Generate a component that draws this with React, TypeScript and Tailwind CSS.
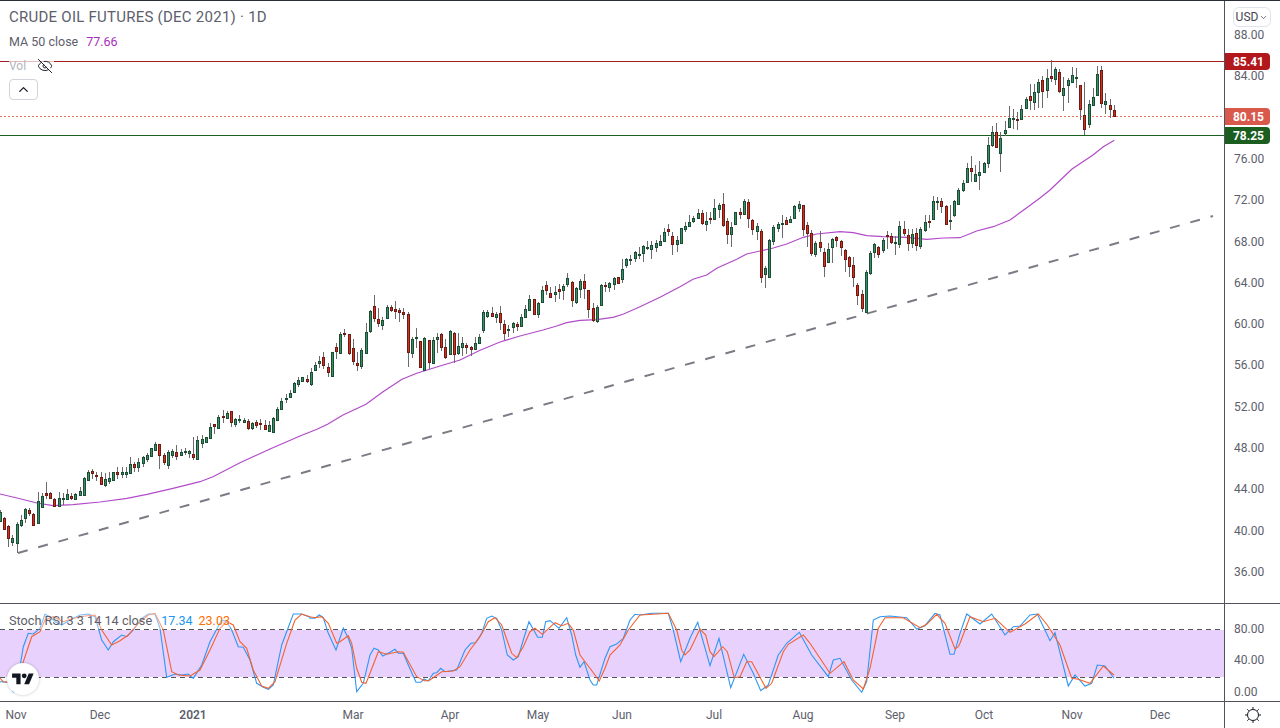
import { EyeOff, ChevronUp, ChevronDown } from "lucide-react";

type Row = number[];
type Pt = number[];

const WIDTH = 1224;

// rows are [x, top, bottom, high, low, up] read off 3x crops, so scale them back to page pixels
const seg = (x0: number, y0: number, rows: Row[]) =>
  rows.map(([x, t, b, h, l, up]) => ({
    x: Math.floor(x0 + x / 3) + 0.5,
    t: Math.round(y0 + t / 3) + 0.5,
    b: Math.max(Math.round(y0 + b / 3), Math.round(y0 + t / 3) + 1) + 0.5,
    h: y0 + h / 3,
    l: y0 + l / 3,
    up: up === 1,
  }));

const candles = [
  ...seg(0, 430, [
    [1, 247, 272, 240, 272, 1], [13, 265, 298, 262, 300, 0], [25, 289, 325, 285, 350, 0], [37, 325, 335, 315, 347, 1],
    [52, 283, 338, 277, 370, 1], [64, 271, 284, 255, 292, 1], [76, 238, 263, 235, 278, 1], [88, 240, 248, 235, 257, 0],
    [100, 253, 284, 250, 287, 0], [115, 214, 278, 186, 282, 1], [127, 199, 230, 190, 232, 1], [139, 190, 195, 156, 208, 0],
    [151, 190, 204, 186, 208, 0], [163, 208, 228, 205, 230, 0], [178, 205, 227, 186, 228, 1], [190, 205, 205, 190, 225, 1],
    [202, 193, 207, 177, 211, 1], [214, 199, 204, 190, 210, 0], [226, 193, 206, 190, 208, 1], [241, 184, 194, 170, 194, 1],
    [253, 145, 194, 140, 194, 1], [265, 127, 150, 120, 150, 1], [277, 124, 128, 118, 147, 0], [289, 135, 135, 126, 152, 0],
    [304, 142, 161, 125, 163, 0], [316, 148, 164, 128, 170, 1], [328, 145, 152, 125, 162, 1], [340, 127, 149, 125, 150, 1],
    [352, 127, 131, 112, 147, 0], [367, 127, 131, 110, 144, 1], [379, 127, 131, 112, 143, 1], [391, 103, 128, 82, 128, 1],
    [403, 103, 110, 95, 125, 0], [415, 97, 110, 85, 125, 1], [430, 82, 98, 78, 110, 1], [442, 76, 86, 70, 95, 1],
    [454, 55, 77, 55, 77, 1], [466, 43, 59, 35, 62, 1], [478, 43, 75, 43, 118, 0], [493, 76, 95, 70, 105, 0],
    [505, 67, 104, 60, 117, 1], [517, 64, 75, 58, 84, 1], [529, 67, 77, 45, 90, 0], [544, 67, 74, 58, 77, 1],
    [556, 64, 64, 55, 75, 1], [568, 63, 68, 60, 84, 1], [580, 72, 80, 22, 90, 0], [592, 31, 88, 18, 90, 1],
  ]),
  ...seg(200, 390, [
    [7, 148, 158, 135, 173, 1], [19, 142, 155, 142, 155, 1], [31, 112, 143, 100, 143, 1], [43, 103, 107, 103, 132, 0],
    [55, 82, 113, 75, 113, 1], [70, 78, 78, 60, 100, 0], [82, 69, 83, 62, 88, 1], [94, 64, 95, 64, 110, 0],
    [106, 88, 103, 85, 110, 1], [118, 88, 88, 75, 100, 1], [133, 91, 95, 85, 100, 1],
  ]),
  ...seg(240, 280, [
    [25, 424, 443, 418, 450, 0], [37, 430, 445, 425, 450, 1], [49, 427, 436, 420, 445, 0], [61, 430, 430, 418, 450, 0],
    [76, 436, 446, 420, 450, 0], [88, 435, 452, 424, 455, 1], [100, 415, 455, 412, 460, 1], [112, 388, 420, 380, 420, 1],
    [124, 364, 387, 355, 388, 1], [139, 355, 355, 342, 368, 1], [151, 340, 350, 330, 350, 1], [163, 310, 335, 305, 337, 1],
    [175, 301, 311, 292, 320, 1], [187, 292, 302, 290, 305, 1], [202, 297, 302, 285, 310, 0], [214, 277, 312, 265, 318, 1],
    [226, 256, 270, 247, 272, 1], [238, 243, 248, 228, 265, 1], [250, 232, 254, 215, 267, 0], [265, 262, 275, 250, 290, 0],
    [277, 217, 287, 215, 288, 1], [289, 202, 212, 190, 237, 0], [301, 163, 218, 155, 222, 1], [313, 160, 160, 148, 170, 0],
    [328, 163, 218, 163, 225, 0], [340, 205, 242, 178, 255, 0], [352, 250, 254, 215, 272, 0], [364, 211, 257, 205, 268, 1],
    [379, 157, 218, 130, 218, 1], [391, 94, 152, 90, 158, 1], [403, 79, 113, 45, 125, 0], [415, 118, 128, 85, 140, 0],
    [427, 121, 134, 110, 150, 1], [442, 82, 113, 75, 116, 1], [454, 82, 89, 75, 95, 0], [466, 88, 92, 64, 117, 0],
    [478, 91, 97, 85, 125, 0], [490, 97, 101, 85, 118, 0], [505, 103, 215, 95, 260, 0], [517, 178, 218, 170, 234, 1],
    [529, 172, 172, 145, 205, 1], [541, 184, 260, 184, 262, 0], [553, 175, 270, 172, 272, 1], [568, 181, 245, 181, 268, 0],
    [580, 181, 250, 172, 252, 1], [592, 172, 178, 160, 218, 1], [604, 163, 200, 158, 212, 0], [616, 202, 230, 178, 238, 0],
    [631, 154, 222, 150, 225, 1], [643, 160, 223, 155, 248, 0], [655, 199, 218, 160, 224, 1], [667, 190, 202, 170, 228, 1],
    [679, 196, 202, 190, 222, 0], [694, 202, 206, 198, 228, 0], [706, 190, 206, 170, 210, 1], [718, 172, 190, 162, 192, 1],
  ]),
  ...seg(480, 180, [
    [10, 397, 450, 390, 460, 1], [22, 397, 407, 390, 415, 1], [37, 400, 407, 380, 410, 0], [49, 403, 410, 395, 430, 1],
    [61, 400, 425, 378, 450, 0], [73, 433, 460, 420, 480, 0], [85, 447, 447, 435, 470, 1], [100, 430, 442, 425, 460, 1],
    [112, 433, 437, 425, 452, 0], [124, 412, 437, 402, 440, 1], [136, 388, 410, 375, 412, 1], [148, 358, 391, 345, 392, 1],
    [163, 358, 401, 358, 405, 0], [175, 370, 401, 365, 415, 1], [187, 331, 367, 318, 370, 1], [199, 316, 329, 303, 345, 0],
    [211, 340, 350, 320, 352, 0], [226, 336, 341, 318, 365, 1], [238, 328, 332, 312, 358, 0], [250, 319, 331, 312, 360, 1],
    [262, 295, 313, 280, 320, 1], [277, 307, 361, 303, 380, 0], [289, 325, 365, 320, 372, 1], [301, 304, 328, 298, 355, 1],
    [313, 304, 323, 282, 358, 0], [325, 331, 386, 331, 415, 0], [340, 385, 421, 370, 425, 0], [352, 382, 424, 375, 428, 1],
    [364, 316, 374, 312, 376, 1], [376, 316, 316, 306, 335, 0], [388, 310, 320, 305, 335, 1], [403, 295, 311, 290, 330, 1],
    [415, 292, 310, 290, 312, 0], [427, 268, 298, 237, 308, 1], [439, 238, 256, 235, 265, 1], [451, 238, 238, 225, 255, 1],
    [466, 217, 235, 212, 245, 1], [478, 223, 223, 200, 238, 1], [490, 198, 220, 195, 245, 1], [502, 202, 202, 182, 210, 1],
    [514, 196, 208, 182, 236, 1], [529, 190, 202, 180, 215, 1], [541, 184, 196, 165, 198, 1], [553, 157, 182, 145, 185, 1],
    [565, 148, 152, 133, 168, 0], [577, 169, 193, 155, 224, 0], [592, 181, 193, 168, 215, 1], [604, 145, 190, 143, 192, 1],
    [616, 138, 148, 125, 155, 1], [628, 127, 139, 105, 141, 1], [640, 115, 124, 108, 130, 1], [655, 100, 115, 88, 118, 1],
    [667, 100, 130, 90, 135, 0], [679, 124, 133, 95, 152, 1], [691, 115, 118, 95, 132, 0], [703, 85, 118, 58, 120, 1],
    [718, 76, 88, 70, 115, 1], [730, 73, 136, 40, 140, 0], [742, 122, 163, 115, 192, 0], [754, 142, 163, 125, 200, 1],
    [766, 97, 133, 95, 135, 1], [781, 97, 103, 85, 118, 0], [793, 64, 103, 58, 105, 1], [805, 67, 115, 58, 145, 0],
    [817, 121, 148, 118, 165, 0], [832, 139, 154, 130, 180, 1],
  ]),
  ...seg(750, 170, [
    [34, 184, 322, 178, 340, 0], [46, 295, 313, 288, 355, 1], [58, 211, 322, 207, 322, 1], [70, 172, 214, 165, 225, 1],
    [85, 163, 175, 155, 185, 1], [97, 160, 160, 135, 203, 1], [109, 151, 163, 140, 165, 0], [121, 148, 157, 138, 160, 1],
    [133, 109, 145, 105, 148, 1], [148, 103, 115, 94, 127, 1], [160, 106, 178, 106, 198, 0], [172, 166, 190, 157, 230, 0],
    [184, 190, 250, 180, 258, 0], [196, 220, 253, 212, 262, 1], [211, 217, 232, 184, 245, 0], [223, 247, 289, 235, 322, 0],
    [235, 238, 277, 220, 280, 1], [247, 208, 232, 205, 280, 1], [259, 202, 211, 198, 230, 0], [274, 214, 232, 210, 258, 0],
    [286, 241, 268, 238, 307, 0], [298, 262, 289, 258, 320, 0], [310, 286, 322, 262, 350, 0], [322, 346, 376, 340, 405, 0],
    [337, 373, 415, 360, 425, 0], [349, 307, 427, 300, 430, 1], [361, 250, 310, 243, 315, 1], [373, 223, 247, 218, 265, 1],
    [385, 232, 253, 228, 265, 0], [400, 211, 241, 205, 250, 1], [412, 196, 196, 183, 238, 0], [424, 199, 217, 190, 222, 0],
    [436, 215, 215, 198, 255, 1], [448, 169, 223, 153, 235, 1], [463, 178, 190, 153, 198, 0], [475, 196, 220, 178, 242, 0],
    [487, 193, 220, 178, 235, 1], [499, 190, 226, 175, 242, 0], [511, 178, 229, 170, 238, 1], [526, 157, 181, 135, 185, 1],
    [538, 154, 154, 135, 175, 0], [550, 94, 148, 78, 150, 1], [562, 94, 94, 82, 120, 1], [574, 94, 109, 85, 130, 0],
    [589, 109, 161, 105, 165, 0], [601, 149, 149, 105, 180, 1], [613, 94, 136, 90, 140, 1], [625, 61, 103, 55, 105, 1],
  ]),
  ...seg(960, 60, [
    [10, 370, 390, 360, 395, 1], [22, 325, 365, 310, 367, 1], [34, 325, 332, 288, 365, 0], [46, 343, 362, 315, 365, 1],
    [58, 337, 344, 303, 390, 1], [73, 310, 335, 305, 338, 1], [85, 256, 308, 230, 323, 1], [97, 217, 256, 198, 260, 1],
    [109, 217, 262, 190, 265, 0], [121, 235, 278, 215, 335, 1], [136, 211, 220, 183, 228, 1], [148, 175, 202, 138, 205, 1],
    [160, 175, 175, 147, 208, 1], [172, 178, 178, 155, 210, 0], [184, 148, 176, 135, 178, 1], [199, 118, 143, 112, 145, 1],
    [211, 109, 121, 72, 150, 0], [223, 97, 125, 72, 150, 1], [235, 67, 97, 58, 145, 1], [247, 61, 94, 48, 145, 0],
    [262, 55, 91, 28, 115, 1], [274, 49, 55, 0, 65, 0], [286, 28, 58, 20, 75, 1], [298, 37, 92, 28, 100, 0],
    [310, 85, 104, 50, 152, 1], [325, 61, 76, 55, 128, 1], [337, 46, 67, 22, 68, 1], [349, 51, 51, 25, 85, 1],
    [361, 76, 146, 76, 180, 0], [373, 166, 208, 67, 225, 0], [388, 133, 193, 120, 203, 1], [400, 112, 136, 85, 138, 1],
    [412, 43, 106, 18, 108, 1], [424, 31, 130, 18, 145, 0], [436, 124, 131, 100, 163, 1], [451, 136, 148, 118, 175, 0],
    [463, 151, 169, 135, 172, 0],
  ]),
];

const maLine: Pt[] = [
  [0, 494], [17, 498], [37, 503], [53, 505.7], [73, 504.7], [100, 502], [127, 498.3], [147, 494.3], [173, 488.3], [200, 481.7],
  [213, 476.7], [240, 462.7], [270, 449], [300, 436], [317, 429.3], [328, 424], [343, 415], [366, 404.3], [383, 391.7], [402, 379.3],
  [416.7, 373.3], [440, 366], [460, 360], [479, 350.7], [500, 342], [520, 336], [543, 330], [556.7, 326], [566.7, 322.7], [580, 320.3],
  [596.7, 319.7], [613, 317.3], [623, 314.3], [640, 306.7], [660, 297.3], [680, 286.7], [693, 279.3], [706.7, 275], [716.7, 268.3], [736.7, 259.3],
  [746.7, 254], [760, 251], [773.3, 248], [786.7, 244], [803.3, 237.3], [816.7, 234], [840, 231.7], [853.3, 232.7], [866.7, 235.7], [883, 236.7],
  [906.7, 237.3], [926.7, 239.3], [943.3, 238], [960, 237.7], [976.7, 231], [993.3, 226.7], [1010, 220], [1025, 209], [1040, 198], [1050, 190],
  [1072, 169], [1093, 155], [1103.3, 146.7], [1114.3, 140.3],
];

// same idea for the oscillator lines, one list per crop
const crop = (x0: number, y0: number, pts: Pt[]) => pts.map(([x, y]) => [x0 + x / 3, y0 + y / 3]);

const stochK: Pt[] = [
  ...crop(0, 600, [
    [0, 245], [25, 247], [40, 275], [55, 230], [70, 140], [85, 100], [100, 102], [120, 85], [135, 43], [150, 50], [165, 65], [185, 75], [210, 60],
    [240, 45], [265, 42], [285, 50], [305, 120], [325, 150], [340, 125], [365, 105], [380, 110], [400, 90], [425, 55], [445, 42], [465, 42], [480, 85],
    [500, 232], [525, 222], [545, 225], [565, 222], [580, 235], [605, 195], [630, 125], [665, 60], [680, 65], [695, 90], [715, 140], [730, 142], [750, 180],
    [770, 250], [790, 262], [805, 268], [820, 255], [845, 135], [880, 42], [905, 42], [930, 52],
  ]),
  ...crop(310, 605, [
    [0, 40], [15, 40], [28, 30], [40, 38], [55, 85], [78, 135], [100, 70], [115, 100], [125, 130], [140, 260], [160, 235], [180, 150], [192, 130], [205, 135],
    [218, 153], [240, 142], [255, 133], [265, 145], [280, 145], [295, 180], [318, 232], [332, 232], [342, 222], [355, 228], [370, 205], [380, 203], [392, 190],
    [405, 200], [440, 195], [465, 135], [483, 115], [497, 113], [515, 85], [530, 40], [545, 33], [560, 40], [575, 75], [592, 150], [610, 165], [625, 155],
    [640, 105], [657, 50], [683, 97], [697, 97], [707, 50], [720, 47], [747, 70], [770, 38], [785, 90], [797, 150], [810, 187], [822, 170], [840, 225],
    [850, 240], [860, 240], [885, 160], [900, 125], [920, 117], [940, 100], [960, 45], [975, 28],
  ]),
  ...crop(640, 605, [
    [0, 30], [35, 25], [85, 25], [100, 75], [122, 170], [150, 100], [173, 52], [210, 182], [237, 100], [272, 248], [311, 148], [340, 205], [362, 257], [385, 240],
    [415, 150], [440, 115], [478, 82], [515, 150], [565, 215], [580, 165], [600, 160], [635, 225], [665, 262], [680, 230], [700, 45], [720, 35], [750, 33],
    [800, 38], [830, 72], [855, 62], [885, 25], [900, 30], [930, 148], [942, 148], [960, 85],
  ]),
  ...crop(960, 600, [
    [20, 42], [60, 72], [95, 42], [135, 105], [160, 80], [180, 78], [210, 45], [232, 42], [270, 122], [285, 98], [325, 258], [345, 225], [375, 258], [395, 250],
    [412, 195], [435, 198], [462, 235],
  ]),
];

const stochD: Pt[] = [
  ...crop(0, 600, [
    [0, 235], [10, 245], [40, 248], [70, 185], [95, 110], [120, 95], [135, 60], [160, 50], [190, 65], [220, 55], [255, 48], [285, 45], [305, 90], [335, 135],
    [360, 122], [385, 105], [415, 70], [445, 45], [465, 40], [490, 90], [515, 215], [535, 225], [570, 228], [600, 210], [630, 150], [660, 85], [680, 65],
    [700, 75], [720, 125], [740, 145], [760, 210], [785, 258], [805, 265], [825, 245], [860, 130], [885, 60], [905, 42], [930, 50],
  ]),
  ...crop(310, 605, [
    [0, 35], [15, 38], [35, 35], [55, 55], [80, 115], [90, 110], [115, 92], [125, 115], [140, 190], [155, 232], [168, 235], [180, 205], [205, 140], [230, 148],
    [265, 140], [280, 142], [320, 215], [345, 228], [360, 225], [395, 200], [430, 198], [450, 185], [480, 135], [510, 95], [535, 50], [555, 38], [575, 60],
    [605, 145], [620, 158], [640, 125], [660, 80], [675, 70], [697, 88], [735, 53], [755, 62], [775, 55], [790, 75], [810, 150], [855, 210], [868, 228],
    [885, 190], [900, 150], [930, 120], [955, 75],
  ]),
  ...crop(640, 605, [
    [0, 30], [40, 28], [85, 25], [110, 75], [125, 135], [135, 150], [150, 135], [180, 72], [197, 90], [210, 140], [222, 155], [248, 125], [262, 140], [283, 218],
    [300, 215], [320, 170], [335, 170], [378, 250], [395, 235], [430, 140], [445, 118], [490, 90], [510, 115], [570, 205], [612, 170], [640, 225], [670, 252],
    [690, 190], [715, 70], [735, 38], [790, 38], [840, 68], [860, 58], [890, 28], [915, 55], [945, 132], [955, 125],
  ]),
  ...crop(960, 600, [
    [0, 130], [30, 50], [70, 65], [105, 55], [150, 97], [195, 72], [235, 42], [262, 75], [300, 135], [335, 235], [355, 238], [390, 250], [430, 198], [462, 225],
  ]),
];

const toPoints = (pts: Pt[]) => pts.map(([x, y]) => `${x.toFixed(1)},${y.toFixed(1)}`).join(" ");

const priceTicks = [88, 84, 76, 72, 68, 64, 60, 56, 52, 48, 44, 40, 36];
const priceY = (p: number) => 34 + ((88 - p) / 4) * 41.3;

const priceTags = [
  { label: "85.41", cls: "top-[52px] bg-[#b2181b]" },
  { label: "80.15", cls: "top-[107px] bg-[#d9594c]" },
  { label: "78.25", cls: "top-[126px] bg-[#1b5e20]" },
];

const timeTicks = [
  { label: "Nov", x: 16 },
  { label: "Dec", x: 100 },
  { label: "2021", x: 193, strong: true },
  { label: "Mar", x: 353 },
  { label: "Apr", x: 450 },
  { label: "May", x: 538 },
  { label: "Jun", x: 622 },
  { label: "Jul", x: 714 },
  { label: "Aug", x: 803 },
  { label: "Sep", x: 895 },
  { label: "Oct", x: 984 },
  { label: "Nov", x: 1072 },
  { label: "Dec", x: 1160 },
];

function PriceChart() {
  return (
    <svg className="block h-full w-full" viewBox={`0 1 ${WIDTH} 602`}>
      <line x1="0" x2={WIDTH} y1="61.5" y2="61.5" stroke="#a51f1f" shapeRendering="crispEdges" />
      <line x1="0" x2={WIDTH} y1="135.5" y2="135.5" stroke="#1b5e20" shapeRendering="crispEdges" />
      <line x1="0" x2={WIDTH} y1="116.5" y2="116.5" stroke="#ea7562" strokeDasharray="2 2" shapeRendering="crispEdges" />
      <line x1="18" y1="553" x2="1213" y2="216" stroke="#7b7b85" strokeWidth="2" strokeDasharray="10 11" />
      <polyline points={toPoints(maLine)} fill="none" stroke="#b24bc9" strokeWidth="1.2" />
      {candles.map((c, i) => (
        <g key={i} shapeRendering="crispEdges">
          <line x1={c.x} x2={c.x} y1={c.h} y2={c.l} stroke="#6b6b6b" />
          <rect
            x={c.x - 1}
            y={c.t}
            width={2}
            height={c.b - c.t}
            fill={c.up ? "#3a8f69" : "#d0301f"}
            stroke={c.up ? "#1a4d33" : "#6e1a12"}
          />
        </g>
      ))}
    </svg>
  );
}

function StochChart() {
  return (
    <svg className="block h-full w-full" viewBox={`0 604 ${WIDTH} 97`}>
      <rect x="0" y="630" width={WIDTH} height="47" fill="#e9d1fd" />
      <line x1="0" x2={WIDTH} y1="629.5" y2="629.5" stroke="#55555c" strokeDasharray="5 4" shapeRendering="crispEdges" />
      <line x1="0" x2={WIDTH} y1="677.5" y2="677.5" stroke="#55555c" strokeDasharray="5 4" shapeRendering="crispEdges" />
      <polyline points={toPoints(stochK)} fill="none" stroke="#2f96f3" strokeWidth="1.1" />
      <polyline points={toPoints(stochD)} fill="none" stroke="#f4622e" strokeWidth="1.1" />
    </svg>
  );
}

function TvLogo() {
  return (
    <div className="absolute left-[7px] top-[59px] flex h-8 w-8 items-center justify-center rounded-full bg-white shadow-[0_0_3px_rgba(0,0,0,0.25)]">
      <svg width="22" height="17" viewBox="0 0 36 28" fill="#131722">
        <path d="M14 22H7V11H0V4h14v18zM28 22h-8l7.5-18h8L28 22z" />
        <circle cx="20" cy="8" r="4" />
      </svg>
    </div>
  );
}

function Gear() {
  return (
    <svg width="18" height="18" viewBox="0 0 18 18" fill="none" stroke="#131722" strokeWidth="1">
      <circle cx="9" cy="9" r="5.5" />
      <path d="M9 1v2M9 15v2M1 9h2M15 9h2M3.3 3.3l1.5 1.5M13.2 13.2l1.5 1.5M3.3 14.7l1.5-1.5M13.2 4.8l1.5-1.5" />
    </svg>
  );
}

export default function App() {
  return (
    <div className="flex h-[728px] w-[1280px] flex-col overflow-hidden border-t border-[#2a2e39] bg-white font-['Roboto',sans-serif] text-[#5d606b]">
      {/* main pane */}
      <div className="flex h-[603px] border-b border-[#50535e]">
        <div className="relative w-[1224px]">
          <PriceChart />
          <div className="absolute left-[9px] top-[7px] flex flex-col items-start">
            <div className="text-[15px] leading-[18px] tracking-[0.25px]">CRUDE OIL FUTURES (DEC 2021) · 1D</div>
            <div className="mt-[8px] flex gap-[8px] text-[12.5px] leading-4">
              <span>MA 50 close</span>
              <span className="text-[#a62ebd]">77.66</span>
            </div>
            <div className="mt-[8px] flex items-center gap-[11px] bg-white/70 pr-px text-[12px] leading-4 text-[#b2b5be]">
              <span>Vol</span>
              <EyeOff size={16} strokeWidth={1.4} className="text-[#131722]" />
            </div>
            <button className="mt-[5px] flex h-[21px] w-[29px] items-center justify-center rounded border border-[#d1d4dc] bg-white text-[#131722]">
              <ChevronUp size={15} strokeWidth={2} />
            </button>
          </div>
        </div>
        <div className="relative w-[56px] border-l border-[#50535e] text-[12px]">
          {priceTicks.map((p) => (
            <span
              key={p}
              className="absolute left-[9px] -translate-y-1/2 leading-4"
              style={{ top: priceY(p) }}
            >
              {p.toFixed(2)}
            </span>
          ))}
          {priceTags.map((t) => (
            <div
              key={t.label}
              className={`absolute left-0 flex h-[17px] w-[45px] items-center justify-center rounded-r-sm pl-[2px] text-[12px] font-bold text-white ${t.cls}`}
            >
              {t.label}
            </div>
          ))}
          <div className="absolute left-[8px] top-[6px] flex h-[20px] w-[38px] items-center justify-center gap-px rounded-md border border-[#e0e3eb] bg-white text-[12px] text-[#42454f]">
            USD
            <ChevronDown size={9} strokeWidth={2} />
          </div>
        </div>
      </div>

      {/* stoch rsi pane */}
      <div className="flex h-[98px] border-b border-[#50535e]">
        <div className="relative w-[1224px]">
          <StochChart />
          <div className="absolute left-[9px] top-[9px] flex items-center gap-[6px] bg-white/40 text-[12.5px] leading-4">
            <span className="mr-[3px] text-[12.7px]">Stoch RSI 3 3 14 14 close</span>
            <span className="text-[#2196f3]">17.34</span>
            <span className="text-[#ff6d00]">23.03</span>
          </div>
          <TvLogo />
        </div>
        <div className="relative w-[56px] border-l border-[#50535e] text-[12px]">
          <span className="absolute left-[9px] top-[17px] leading-4">80.00</span>
          <span className="absolute left-[9px] top-[48px] leading-4">40.00</span>
          <span className="absolute left-[9px] top-[80px] leading-4">0.00</span>
        </div>
      </div>

      {/* time axis */}
      <div className="flex flex-1">
        <div className="relative w-[1224px] text-[12px]">
          {timeTicks.map((t) => (
            <span
              key={`${t.label}-${t.x}`}
              className={`absolute top-[5px] -translate-x-1/2 leading-4 ${t.strong ? "font-semibold" : ""}`}
              style={{ left: t.x }}
            >
              {t.label}
            </span>
          ))}
        </div>
        <div className="flex w-[56px] items-center justify-center border-l border-[#50535e]">
          <Gear />
        </div>
      </div>
    </div>
  );
}
